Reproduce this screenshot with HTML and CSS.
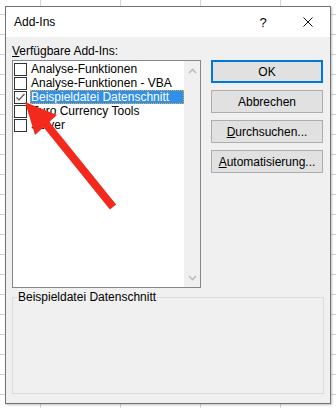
FILE: index.html
```html
<!DOCTYPE html>
<html lang="de">
<head>
    <meta charset="UTF-8">
    <title>Add-Ins</title>
    <link rel="stylesheet" href="styles.css">
</head>
<body>

    <div class="dialog">
        <div class="titlebar">
            <span class="title">Add-Ins</span>
            <span class="tb-btn help">?</span>
            <span class="tb-btn close">
                <svg width="10" height="10" viewBox="0 0 10 10"><path d="M0.5 0.5 L9.5 9.5 M9.5 0.5 L0.5 9.5" stroke="#111" stroke-width="1" fill="none"/></svg>
            </span>
        </div>

        <div class="content">
            <div class="caption"><u>V</u>erfügbare Add-Ins:</div>

            <div class="main-row">
                <div class="listbox">
                    <ul class="items">
                        <li><span class="box"></span><span class="label">Analyse-Funktionen</span></li>
                        <li><span class="box"></span><span class="label">Analyse-Funktionen - VBA</span></li>
                        <li class="selected"><span class="box">
                            <svg width="11" height="11" viewBox="0 0 11 11"><path d="M1.5 5.5 L4 8 L9.5 2" stroke="#555" stroke-width="1.2" fill="none"/></svg>
                        </span><span class="label">Beispieldatei Datenschnitt</span></li>
                        <li><span class="box"></span><span class="label">Euro Currency Tools</span></li>
                        <li><span class="box"></span><span class="label">Solver</span></li>
                    </ul>
                    <div class="scrollbar">
                        <svg width="9" height="6" viewBox="0 0 9 6"><path d="M1 5 L4.5 1.5 L8 5" stroke="#bdbdbd" stroke-width="1.6" fill="none"/></svg>
                        <svg width="9" height="6" viewBox="0 0 9 6"><path d="M1 1 L4.5 4.5 L8 1" stroke="#bdbdbd" stroke-width="1.6" fill="none"/></svg>
                    </div>
                </div>

                <div class="buttons">
                    <button class="default">OK</button>
                    <button>Abbrechen</button>
                    <button><u>D</u>urchsuchen...</button>
                    <button><u>A</u>utomatisierung...</button>
                </div>
            </div>

            <fieldset class="group">
                <legend>Beispieldatei Datenschnitt</legend>
            </fieldset>
        </div>
    </div>

    <!-- roter Pfeil über der Liste -->
    <svg class="arrow" width="336" height="408" viewBox="0 0 336 408">
        <path d="M46 124 L113 207" stroke="#f2291c" stroke-width="8" fill="none"/>
        <polygon points="25,102 57,115 35,135" fill="#f2291c"/>
    </svg>

</body>
</html>
```

FILE: styles.css
```css
body {
    margin: 0;
    width: 336px;
    height: 408px;
    overflow: hidden;
    position: relative;
    font-family: "Liberation Sans", Arial, sans-serif;
    font-size: 12px;
    color: #000;
    background-color: #fff;
    background-image:
        linear-gradient(to right, transparent 40px, #d4d4d4 40px, #d4d4d4 41px, transparent 41px),
        linear-gradient(to bottom, transparent 14px, #d4d4d4 14px, #d4d4d4 15px, transparent 15px);
    background-size: 80px 100%, 100% 20px;
}

.dialog {
    margin: 6px 0 0 5px;
    width: 326px;
    height: 398px;
    box-sizing: border-box;
    border: 1px solid #737373;
    background: #f0f0f0;
    box-shadow: 1px 1px 2px rgba(0, 0, 0, 0.25);
    display: flex;
    flex-direction: column;
}

.titlebar {
    height: 30px;
    background: #fff;
    display: flex;
    align-items: center;
    padding-left: 8px;
}
.title {
    flex: 1;
    font-size: 12px;
}
.tb-btn {
    height: 30px;
    display: flex;
    align-items: center;
    justify-content: center;
}
.help {
    width: 46px;
    font-size: 13px;
}
.close {
    width: 44px;
}

.content {
    padding: 7px 6px 0 6px;
}
.caption {
    line-height: 15px;
    margin-bottom: 1px;
}

.main-row {
    display: flex;
    gap: 10px;
}

.listbox {
    width: 189px;
    height: 228px;
    box-sizing: border-box;
    border: 1px solid #82878f;
    background: #fff;
    display: flex;
}
.items {
    list-style: none;
    margin: 0;
    padding: 1px 0 0 0;
    flex: 1;
}
.items li {
    height: 14px;
    display: flex;
    align-items: center;
    white-space: nowrap;
}
.box {
    width: 13px;
    height: 13px;
    box-sizing: border-box;
    border: 1px solid #333;
    background: #fff;
    margin-left: 1px;
    margin-right: 3px;
    display: flex;
    align-items: center;
    justify-content: center;
}
.label {
    flex: 1;
    height: 14px;
    line-height: 14px;
    padding-left: 1px;
    box-sizing: border-box;
}
.selected .label {
    background: #2f8fe9;
    color: #fff;
    outline: 1px dotted #f5a623;
    outline-offset: -1px;
}

.scrollbar {
    width: 16px;
    background: #f0f0f0;
    display: flex;
    flex-direction: column;
    justify-content: space-between;
    align-items: center;
    padding: 7px 0 6px 0;
}

.buttons {
    display: flex;
    flex-direction: column;
    gap: 7px;
}
button {
    width: 112px;
    height: 23px;
    font-family: "Liberation Sans", Arial, sans-serif;
    font-size: 12px;
    color: #000;
    background: #e1e1e1;
    border: 1px solid #adadad;
    padding: 0;
}
button.default {
    border: 2px solid #0078d7;
}

.group {
    margin: 2px 0 0 0;
    padding: 0;
    height: 104px;
    box-sizing: border-box;
    border: 1px solid #dcdcdc;
}
.group legend {
    padding: 0;
    margin-left: 5px;
    line-height: 15px;
}

.arrow {
    position: absolute;
    left: 0;
    top: 0;
}
```
